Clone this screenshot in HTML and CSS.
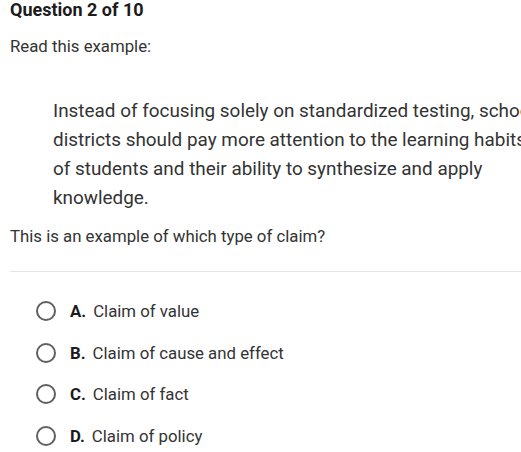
FILE: index.html
```html
<!DOCTYPE html>
<html lang="en">
<head>
<meta charset="utf-8">
<title>Question 2 of 10</title>
<link rel="stylesheet" href="styles.css">
</head>
<body>
<main class="page">
  <h1 class="title">Question 2 of 10</h1>
  <p class="prompt">Read this example:</p>
  <blockquote class="passage">Instead of focusing solely on standardized testing, school districts should pay more attention to the learning habits of students and their ability to synthesize and apply knowledge.</blockquote>
  <p class="question">This is an example of which type of claim?</p>
  <hr class="divider">
  <ul class="options">
    <li class="option"><span class="radio"></span><span class="letter">A.</span><span class="text">Claim of value</span></li>
    <li class="option"><span class="radio"></span><span class="letter">B.</span><span class="text">Claim of cause and effect</span></li>
    <li class="option"><span class="radio"></span><span class="letter">C.</span><span class="text">Claim of fact</span></li>
    <li class="option"><span class="radio"></span><span class="letter">D.</span><span class="text">Claim of policy</span></li>
  </ul>
</main>
</body>
</html>
```

FILE: styles.css
```css
html, body {
  margin: 0;
  padding: 0;
  overflow: hidden;
  background: #ffffff;
}

.page {
  font-family: Roboto, "Liberation Sans", sans-serif;
  color: #333333;
  padding-left: 10px;
  width: 560px;
}

.title {
  margin: 0;
  font-size: 18px;
  line-height: 20px;
  font-weight: 700;
  color: #1b1b1b;
}

.prompt {
  margin: 16px 0 0;
  font-size: 16.8px;
  line-height: 20px;
}

.passage {
  margin: 40px 0 0 43px;
  width: 490px;
  font-size: 18.9px;
  line-height: 29px;
}

.question {
  margin: 14px 0 0;
  font-size: 16.8px;
  line-height: 20px;
}

.divider {
  margin: 25px 0 0;
  border: 0;
  height: 1px;
  background: #e4e4e4;
}

.options {
  list-style: none;
  margin: 29px 0 0;
  padding: 0 0 0 26px;
  display: flex;
  flex-direction: column;
  gap: 21.5px;
}

.option {
  display: flex;
  align-items: center;
  height: 20px;
  font-size: 16.8px;
}

.radio {
  box-sizing: border-box;
  width: 20px;
  height: 20px;
  border: 2px solid #606060;
  border-radius: 50%;
  flex: none;
}

.letter {
  margin-left: 14px;
  font-weight: 700;
  color: #1b1b1b;
}

.text {
  margin-left: 7px;
}
```
